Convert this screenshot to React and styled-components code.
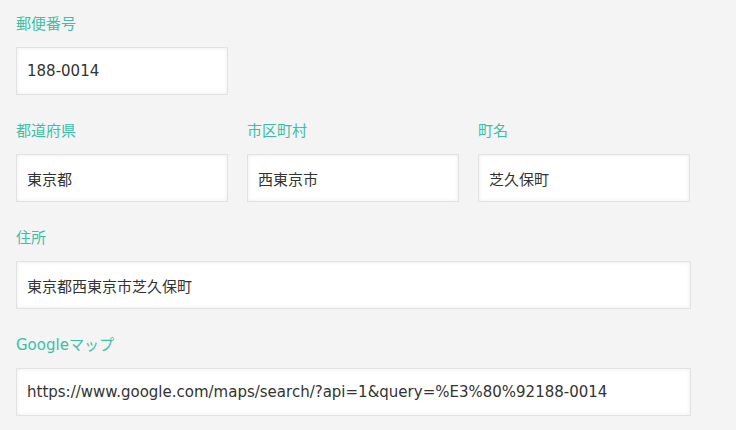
import React from "react";
import styled, { createGlobalStyle } from "styled-components";

const G = createGlobalStyle`
  body { margin:0; background:#f4f4f4; font-family: "DejaVu Sans", "Noto Sans CJK JP", sans-serif; }
`;
const Page = styled.div`padding:13px 45px 0 16px; display:flex; flex-direction:column; gap:25px; width:675px;`;
const Row = styled.div`display:grid; grid-template-columns:${p => p.$cols || "1fr"}; column-gap:19px;`;
const Field = styled.div`display:flex; flex-direction:column; gap:12px;`;
const Label = styled.label`color:#3cbfa6; font-size:15px; line-height:22px; height:22px;`;
const Input = styled.div`
  box-sizing:border-box; height:48px; background:#fff; border:1px solid #e2e2e2;
  box-shadow: inset 0 0 4px rgba(0,0,0,0.08);
  display:flex; align-items:center; padding:0 10px; font-size:15px; color:#333;
  white-space:nowrap; overflow:hidden;
`;
const F = ({ l, v }) => (<Field><Label>{l}</Label><Input>{v}</Input></Field>);

export default function App() {
  return (<><G />
    <Page>
      <Row $cols="212px"><F l="郵便番号" v="188-0014" /></Row>
      <Row $cols="212px 212px 212px"><F l="都道府県" v="東京都" /><F l="市区町村" v="西東京市" /><F l="町名" v="芝久保町" /></Row>
      <Row><F l="住所" v="東京都西東京市芝久保町" /></Row>
      <Row><F l="Googleマップ" v="https://www.google.com/maps/search/?api=1&query=%E3%80%92188-0014" /></Row>
    </Page></>);
}
